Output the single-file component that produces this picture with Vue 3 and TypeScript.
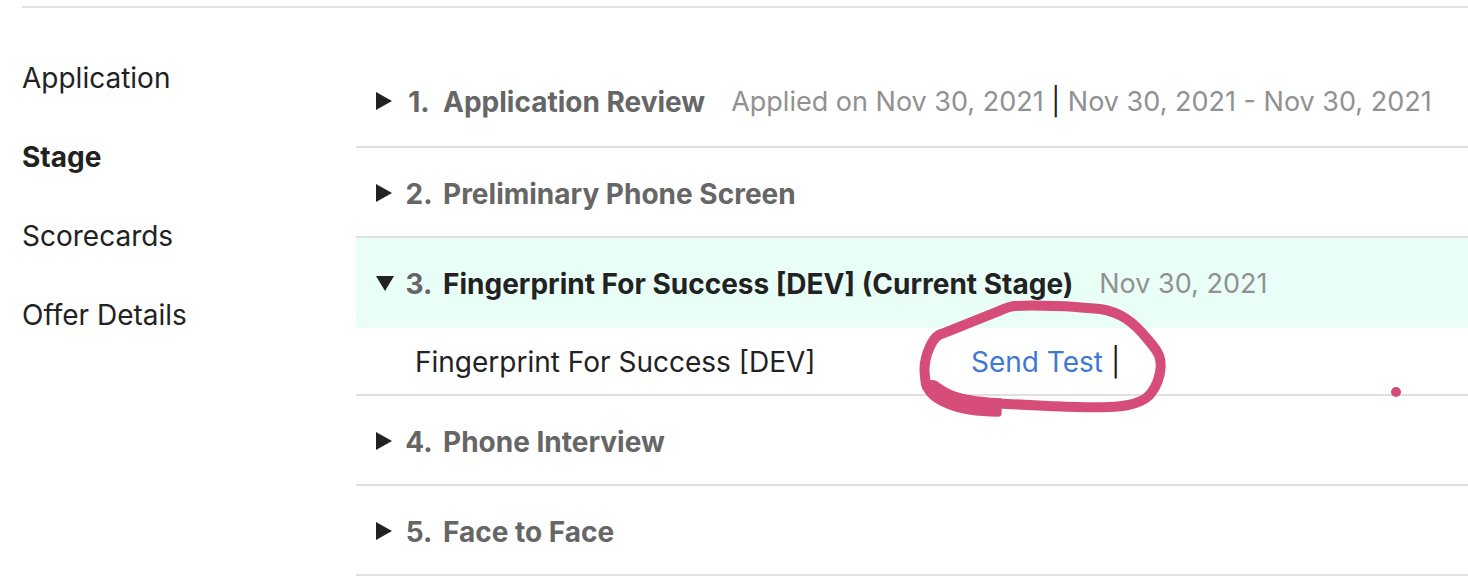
<script setup lang="ts">
import { ref } from 'vue'

interface Stage {
  id: number
  name: string
  current?: boolean
  applied?: string
  dates?: string
  test?: string
}

const sections = ['Application', 'Stage', 'Scorecards', 'Offer Details']
const activeSection = ref('Stage')

const stages: Stage[] = [
  { id: 1, name: 'Application Review', applied: 'Applied on Nov 30, 2021', dates: 'Nov 30, 2021 - Nov 30, 2021' },
  { id: 2, name: 'Preliminary Phone Screen' },
  {
    id: 3,
    name: 'Fingerprint For Success [DEV] (Current Stage)',
    current: true,
    dates: 'Nov 30, 2021',
    test: 'Fingerprint For Success [DEV]',
  },
  { id: 4, name: 'Phone Interview' },
  { id: 5, name: 'Face to Face' },
]

const openStage = ref(3)

function toggle(id: number) {
  openStage.value = openStage.value === id ? 0 : id
}
</script>

<template>
  <div class="page">
    <div class="layout">
      <nav class="side" aria-label="Candidate sections">
        <a
          v-for="s in sections"
          :key="s"
          href="#"
          :class="{ active: s === activeSection }"
          @click.prevent="activeSection = s"
        >{{ s }}</a>
      </nav>
      <main class="stages">
        <section v-for="stage in stages" :key="stage.id" class="stage">
          <div class="row" :class="{ current: stage.current }">
            <button class="toggle" type="button" :aria-expanded="openStage === stage.id" @click="toggle(stage.id)">
              <svg class="arrow" viewBox="0 0 20 20" aria-hidden="true">
                <path v-if="openStage === stage.id" d="M1 2H19L10 17Z" />
                <path v-else d="M1 0V18L17 9Z" />
              </svg>
              <span class="number">{{ stage.id }}.</span>
              <span class="name">{{ stage.name }}</span>
            </button>
            <span v-if="stage.dates" class="meta">
              <template v-if="stage.applied">{{ stage.applied }} <span class="bar">|</span>{{ ' ' }}</template>{{ stage.dates }}
            </span>
          </div>
          <div v-if="stage.test && openStage === stage.id" class="detail">
            <span class="test">{{ stage.test }}</span>
            <span class="actions">
              <a href="#" @click.prevent>Send Test</a> |
              <svg class="ring" viewBox="0 0 900 600" aria-hidden="true">
                <path
                  class="stroke"
                  d="M82 475C68 430 73 385 90 350C104 320 115 313 135 308L285 248C330 227 340 227 370 227C450 226 530 230 600 237C660 246 700 275 743 328C780 370 783 385 782 412C780 440 768 470 753 490C735 513 705 524 660 529C590 536 520 531 430 527L240 518"
                />
                <path
                  class="blob"
                  d="M62 458C68 488 88 511 125 529C180 555 230 559 295 560Q305 560 305 548V505C250 502 205 497 170 486C140 476 125 463 110 453Q98 447 88 452Z"
                />
              </svg>
            </span>
            <span class="dot" aria-hidden="true"></span>
          </div>
        </section>
      </main>
    </div>
  </div>
</template>

<style>
body {
  margin: 0;
  background: #fff;
}
</style>

<style scoped>
.page {
  padding-top: 6px;
  overflow: hidden;
  color: #222;
  font-family: Inter, "Liberation Sans", Arial, sans-serif;
  font-size: 28px;
  line-height: 36px;
}

.layout {
  display: grid;
  grid-template-columns: 334px minmax(0, 1fr);
  margin-left: 22px;
  padding-top: 48px;
  border-top: 2px solid #e0e0e0;
}

.side {
  display: flex;
  flex-direction: column;
  align-items: flex-start;
  gap: 43px;
  padding-top: 4px;
}

.side a {
  color: inherit;
  text-decoration: none;
}

.side .active {
  font-weight: 700;
}

.row {
  display: flex;
  align-items: center;
  gap: 26px;
  padding: 28px 0 24px 19px;
  border-bottom: 2px solid #e0e0e0;
  white-space: nowrap;
}

.stage:first-child .row {
  padding-bottom: 26px;
}

.row.current {
  padding-bottom: 26px;
  border-bottom: 0;
  background: #eafef8;
}

.toggle {
  display: flex;
  align-items: center;
  padding: 0;
  border: 0;
  background: none;
  color: #666;
  font: inherit;
  font-weight: 700;
  cursor: pointer;
}

.arrow {
  width: 20px;
  height: 20px;
  fill: #222;
}

.number {
  width: 48px;
  box-sizing: border-box;
  text-align: center;
}

.current .name {
  color: #222;
}

.meta {
  color: #919191;
  font-size: 27px;
}

.bar {
  color: #222;
}

.detail {
  position: relative;
  display: grid;
  grid-template-columns: 556px minmax(0, 1fr);
  padding-left: 59px;
  border-bottom: 2px solid #e0e0e0;
}

.test,
.actions {
  padding: 16px 0 14px;
}

.actions {
  position: relative;
}

.actions a {
  color: #4178d4;
  text-decoration: none;
}

.ring {
  position: absolute;
  top: -98px;
  left: -71px;
  width: 300px;
  height: 200px;
  pointer-events: none;
}

.stroke {
  fill: none;
  stroke: #d64d7a;
  stroke-width: 30;
  stroke-linejoin: round;
}

.blob {
  fill: #d64d7a;
}

.dot {
  position: absolute;
  right: 67px;
  bottom: -3px;
  width: 10px;
  height: 10px;
  border-radius: 50%;
  background: #d64d7a;
}
</style>
